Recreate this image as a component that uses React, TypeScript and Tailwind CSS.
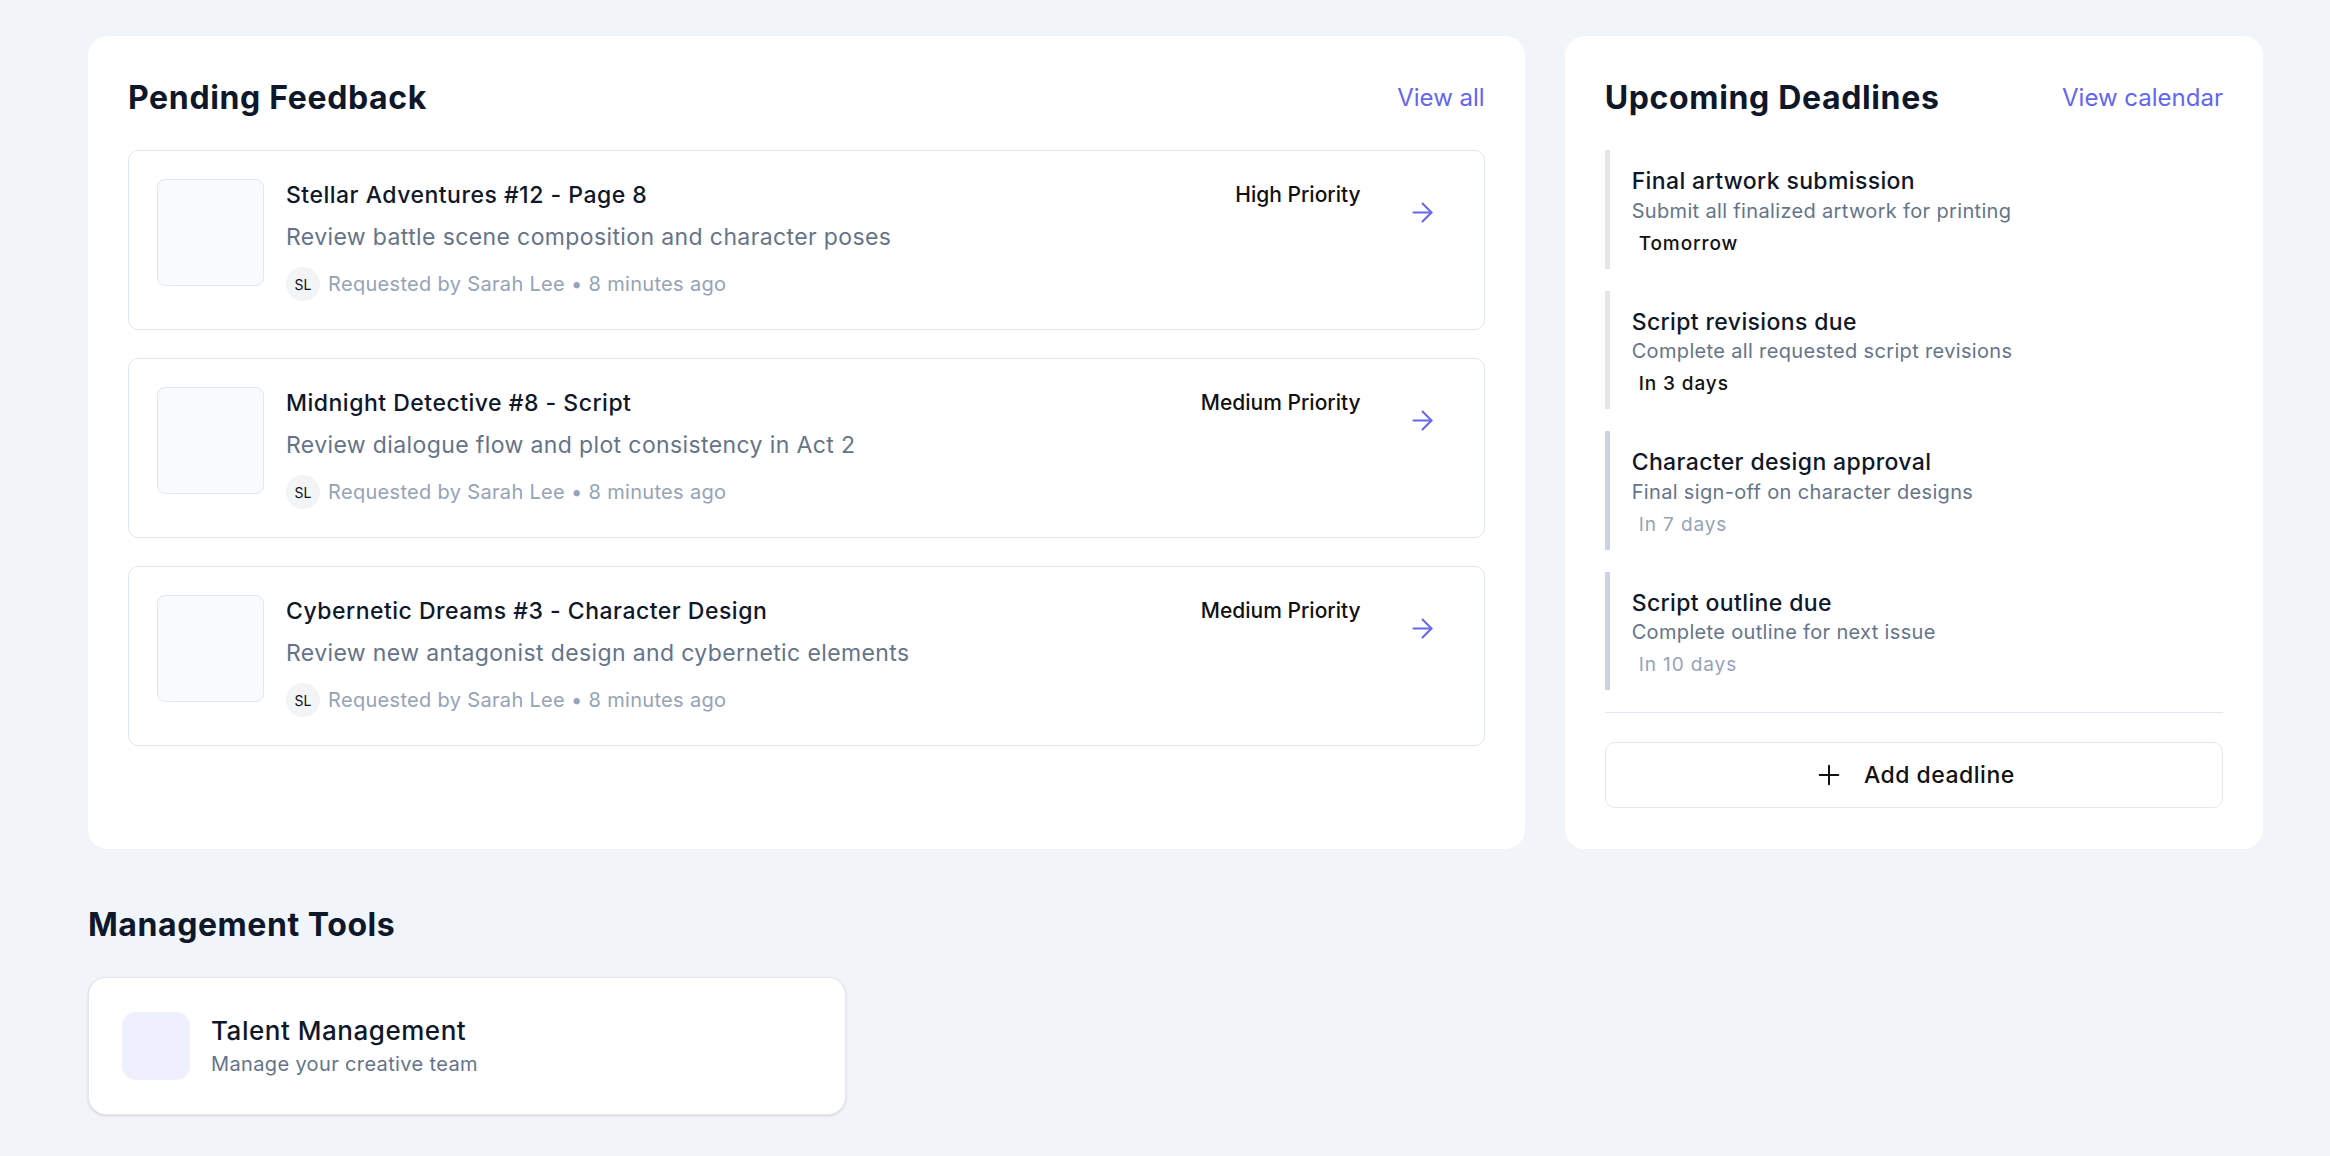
import React from 'react';
import { ArrowRight, Plus } from 'lucide-react';

const feedback = [
  {
    title: 'Stellar Adventures #12 - Page 8',
    desc: 'Review battle scene composition and character poses',
    priority: 'High Priority',
  },
  {
    title: 'Midnight Detective #8 - Script',
    desc: 'Review dialogue flow and plot consistency in Act 2',
    priority: 'Medium Priority',
  },
  {
    title: 'Cybernetic Dreams #3 - Character Design',
    desc: 'Review new antagonist design and cybernetic elements',
    priority: 'Medium Priority',
  },
];

const deadlines = [
  { title: 'Final artwork submission', desc: 'Submit all finalized artwork for printing', when: 'Tomorrow', soon: true },
  { title: 'Script revisions due', desc: 'Complete all requested script revisions', when: 'In 3 days', soon: true },
  { title: 'Character design approval', desc: 'Final sign-off on character designs', when: 'In 7 days', soon: false },
  { title: 'Script outline due', desc: 'Complete outline for next issue', when: 'In 10 days', soon: false },
];

export default function App() {
  return (
    <div className="min-h-screen bg-[#f1f4f9] pl-[88px] pr-[67px] pt-9 pb-10 font-['Inter',sans-serif]">
      <div className="grid grid-cols-3 gap-10">
        {/* Pending Feedback */}
        <div className="col-span-2 bg-white rounded-[20px] p-10 flex flex-col">
          <div className="flex items-center justify-between h-[44px]">
            <h2 className="text-[32px] leading-[44px] font-bold tracking-[0.65px] text-[#0f172a]">Pending Feedback</h2>
            <button className="text-[24px] text-[#6366f1]">View all</button>
          </div>

          <div className="mt-[30px] flex flex-col gap-[28px]">
            {feedback.map((item) => (
              <div key={item.title} className="flex items-start rounded-[10px] border-[1.5px] border-[#e2e8f0] p-[28px]">
                <div className="w-[107px] h-[107px] shrink-0 rounded-[8px] border-[1.5px] border-[#e2e8f0] bg-[#f8fafc]" />
                <div className="ml-[22px] flex-1 min-w-0">
                  <h3 className="text-[23px] leading-[32px] font-medium tracking-[0.5px] text-[#0f172a]">{item.title}</h3>
                  <p className="mt-[10px] text-[23px] leading-[32px] tracking-[0.38px] text-[#64748b]">{item.desc}</p>
                  <div className="mt-[14px] flex items-center gap-2">
                    <div className="w-[34px] h-[34px] rounded-full bg-[#f3f4f6] flex items-center justify-center text-[14px] text-[#111]">
                      SL
                    </div>
                    <span className="text-[20px] tracking-[0.32px] text-[#94a3b8]">Requested by Sarah Lee • 8 minutes ago</span>
                  </div>
                </div>
                <span className="text-[21px] leading-[32px] font-medium text-[#111]">{item.priority}</span>
                <ArrowRight size={31} strokeWidth={1.5} className="ml-[46px] mt-[18px] mr-[18px] text-[#6366f1] shrink-0" />
              </div>
            ))}
          </div>
        </div>

        {/* Upcoming Deadlines */}
        <div className="bg-white rounded-[20px] px-10 pt-10 pb-[41px] flex flex-col">
          <div className="flex items-center justify-between h-[44px]">
            <h2 className="text-[32px] leading-[44px] font-bold tracking-[0.65px] text-[#0f172a]">Upcoming Deadlines</h2>
            <button className="text-[24px] text-[#6366f1]">View calendar</button>
          </div>

          <div className="mt-[30px] flex flex-col gap-[22px]">
            {deadlines.map((d) => (
              <div
                key={d.title}
                className={`border-l-[5px] pl-[22px] pt-4 pb-3 ${d.soon ? 'border-[#e7e5e4]' : 'border-[#cbd5e1]'}`}
              >
                <h4 className="text-[23px] leading-[30px] font-medium tracking-[0.37px] text-[#0f172a]">{d.title}</h4>
                <p className="mt-[1.5px] text-[20px] leading-[26px] tracking-[0.34px] text-[#64748b]">{d.desc}</p>
                <span
                  className={`mt-[7px] inline-block px-[7px] text-[19px] leading-[26px] tracking-[0.9px] ${
                    d.soon ? 'font-medium text-[#111]' : 'text-[#94a3b8]'
                  }`}
                >
                  {d.when}
                </span>
              </div>
            ))}
          </div>

          <div className="mt-[22px] border-t-[1.5px] border-[#e2e8f0]" />

          <button className="mt-[29px] h-[66px] w-full flex items-center justify-center gap-[19px] rounded-[10px] border-[1.5px] border-[#e5e7eb] text-[23px] font-medium tracking-[0.5px] text-[#111]">
            <Plus size={32} strokeWidth={1.5} />
            Add deadline
          </button>
        </div>
      </div>

      {/* Management Tools */}
      <h2 className="mt-[54px] text-[32px] leading-[44px] font-bold tracking-[0.56px] text-[#0f172a]">Management Tools</h2>
      <div className="mt-[30px] w-[758px] bg-white rounded-[18px] border-[1.5px] border-[#e5e7eb] shadow-sm px-[33px] py-[34px] flex items-center gap-[21px]">
        <div className="w-[68px] h-[68px] shrink-0 rounded-[14px] bg-[#eef0fe]" />
        <div>
          <h3 className="text-[26px] leading-[34px] font-medium tracking-[0.53px] text-[#0f172a]">Talent Management</h3>
          <p className="mt-[2px] text-[20px] leading-[28px] tracking-[0.36px] text-[#64748b]">Manage your creative team</p>
        </div>
      </div>
    </div>
  );
}
